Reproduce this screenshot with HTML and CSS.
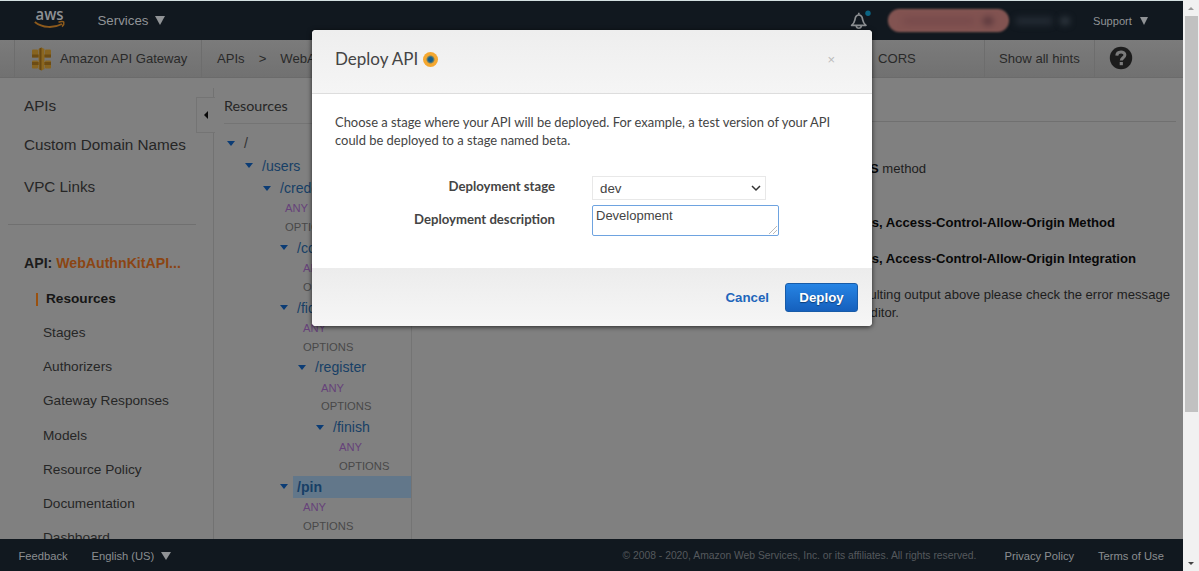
FILE: index.html
```html
<!DOCTYPE html>
<html lang="en">
<head>
<meta charset="utf-8">
<title>Amazon API Gateway</title>
<link rel="stylesheet" href="styles.css">
</head>
<body>
<div class="window">
  <div class="page">
    <header class="topbar">
      <svg class="aws-logo" width="34" height="28" viewBox="0 0 34 28">
        <text x="1.500" y="15.500" class="aws-word" textLength="28" lengthAdjust="spacingAndGlyphs">aws</text>
        <path d="M.8 18C8.500 24.200 20 24.200 28 20" fill="none" stroke="#8d5a1c" stroke-width="1.900"/>
        <path d="M24.500 18.300c2.200-1 4.900-.9 5.300-.2.300 1-.4 3.200-1.800 4.500" fill="none" stroke="#8d5a1c" stroke-width="1.500"/>
      </svg>
      <span class="services">Services</span><i class="caret caret-services"></i>
      <div class="bell">
        <svg width="22" height="22" viewBox="0 0 22 22">
          <path d="M1.600 15.300C4.500 13 4.600 11.300 5 9.300 5.400 6.500 6.700 5 8.800 5s3.400 1.500 3.800 4.300c.4 2 .5 3.700 3.400 6z" fill="none" stroke="#8c8f92" stroke-width="1.700" stroke-linejoin="round"/>
          <path d="M8.800 2.800v2M6.300 16c.3 3 4.700 3 5 0" fill="none" stroke="#8c8f92" stroke-width="1.700"/>
          <circle cx="18" cy="3.200" r="2.700" fill="#0b6584"/>
        </svg>
      </div>
      <div class="account"><i class="smudge smudge-a"></i><i class="smudge smudge-b"></i></div>
      <div class="region"><i class="smudge smudge-c"></i><i class="smudge smudge-d"></i></div>
      <span class="support">Support</span><i class="caret caret-support"></i>
    </header>

    <nav class="crumbs">
      <div class="crumb-service">
        <svg width="22" height="24" viewBox="0 0 22 24">
          <g fill="#876420"><rect x="1" y="2.500" width="6" height="8" rx="1"/><rect x="1" y="13.500" width="6" height="8" rx="1"/><rect x="14" y="2.500" width="6" height="8" rx="1"/><rect x="14" y="13.500" width="6" height="8" rx="1"/></g>
          <g fill="#6d4c14"><rect x="1" y="7.500" width="19" height="3"/><rect x="1" y="15" width="19" height="3"/></g>
          <path d="M7.500 2l3-1.500 3 1.500v20l-3 1.500-3-1.500z" fill="#8b6720"/><path d="M10.500.5v23l-2-1V1.500z" fill="#684812"/>
        </svg>
        <span>Amazon API Gateway</span>
      </div>
      <div class="crumb-path"><span>APIs</span><span>&gt;</span><span>WebA</span></div>
      <div class="crumb-cors">CORS</div>
      <div class="crumb-hints">Show all hints</div>
      <svg class="help" width="24" height="24" viewBox="0 0 24 24">
        <circle cx="12" cy="12" r="11.200" fill="#1c1c1c"/>
        <path d="M7.800 9.600C8 4.800 16 4.900 15.900 9c-.1 2.700-3.600 2.800-3.600 5.500" fill="none" stroke="#7b7b7b" stroke-width="3"/>
        <rect x="10.700" y="16" width="3.200" height="3.200" fill="#7b7b7b"/>
      </svg>
    </nav>

    <div class="content">
      <aside class="sidebar">
        <div class="side-top">APIs</div>
        <div class="side-top side-domain">Custom Domain Names</div>
        <div class="side-top side-vpc">VPC Links</div>
        <div class="side-api">API: <b>WebAuthnKitAPI...</b></div>
        <ul class="side-menu">
          <li class="current">Resources</li>
          <li>Stages</li><li>Authorizers</li><li>Gateway Responses</li><li>Models</li>
          <li>Resource Policy</li><li>Documentation</li><li>Dashboard</li>
        </ul>
      </aside>
      <div class="gutter"><div class="collapse"><i></i></div></div>
      <section class="tree">
        <h2>Resources</h2>
        <div class="node root"><i></i><span>/</span></div>
        <div class="node l1"><i></i><span>/users</span></div>
        <div class="node l2"><i></i><span>/credentials</span></div>
        <div class="method any m2">ANY</div><div class="method m2">OPTIONS</div>
        <div class="node l3"><i></i><span>/codes</span></div>
        <div class="method any m3">ANY</div><div class="method m3">OPTIONS</div>
        <div class="node l3"><i></i><span>/fido2</span></div>
        <div class="method any m3">ANY</div><div class="method m3">OPTIONS</div>
        <div class="node l4"><i></i><span>/register</span></div>
        <div class="method any m4">ANY</div><div class="method m4">OPTIONS</div>
        <div class="node l5"><i></i><span>/finish</span></div>
        <div class="method any m5">ANY</div><div class="method m5">OPTIONS</div>
        <div class="node l3 selected"><i></i><span>/pin</span></div>
        <div class="method any m3">ANY</div><div class="method m3">OPTIONS</div>
      </section>
      <main class="result">
        <div class="line line-a"><b>OPTIONS</b> method</div>
        <div class="line line-b"><b>Methods, Access-Control-Allow-Origin Method</b></div>
        <div class="line line-c"><b>Methods, Access-Control-Allow-Origin Integration</b></div>
        <div class="line line-d">resulting output above please check the error message</div>
        <div class="line line-e">editor.</div>
      </main>
    </div>

    <footer class="footer">
      <span class="feedback">Feedback</span>
      <span class="language">English (US)</span><i class="caret caret-language"></i>
      <span class="copyright">© 2008 - 2020, Amazon Web Services, Inc. or its affiliates. All rights reserved.</span>
      <span class="privacy">Privacy Policy</span>
      <span class="terms">Terms of Use</span>
    </footer>
  </div>

  <div class="scrollbar"><i class="up"></i><div class="thumb"></div><i class="down"></i></div>

  <div class="modal">
    <div class="modal-head">
      <h1>Deploy API</h1><i class="beacon"></i><span class="close">×</span>
    </div>
    <div class="modal-body">
      <p><span class="intro-a">Choose a stage where your API will be deployed. For example, a test version of your API</span><br><span class="intro-b">could be deployed to a stage named beta.</span></p>
      <div class="field">
        <label>Deployment stage</label>
        <div class="select"><span>dev</span>
          <svg width="10" height="7" viewBox="0 0 10 7"><path d="M1 1l4 4 4-4" fill="none" stroke="#333" stroke-width="1.500"/></svg>
        </div>
      </div>
      <div class="field field-desc">
        <label>Deployment description</label>
        <div class="textarea"><span>Development</span>
          <svg width="9" height="9" viewBox="0 0 9 9"><path d="M1 9l8-8M5 9l4-4" stroke="#bbb" stroke-width="1"/></svg>
        </div>
      </div>
    </div>
    <div class="modal-foot"><span class="cancel">Cancel</span><span class="deploy">Deploy</span></div>
  </div>
</div>
</body>
</html>
```
FILE: styles.css
```css
* { box-sizing: border-box; }
body { margin: 0; font-family: "Liberation Sans", Arial, sans-serif; }
i { font-style: normal; flex: none; }
span, svg { flex: none; }
.window { position: relative; display: flex; width: 1199px; height: 571px; overflow: hidden; }
.page { display: flex; flex-direction: column; width: 1183px; height: 571px; background: #808080; }

.topbar { display: flex; align-items: center; flex: none; height: 40px; border-top: 1px solid #d3dfe0; background: #11181f; color: #909396; white-space: nowrap; }
.aws-logo { margin: 0 0 5px 34px; overflow: visible; }
.aws-word { font: 600 16px "Open Sans", sans-serif; fill: #8f9194; }
.services { width: 51px; margin-left: 29.500px; font-size: 13.300px; }
.caret { width: 0; height: 0; border: 5px solid transparent; border-top: 9px solid #909396; border-bottom: 0; }
.caret-services { margin-left: 6px; }
.bell { width: 22px; height: 22px; margin-left: 685.500px; }
.account { display: flex; align-items: center; width: 121px; height: 23px; margin-left: 16px; border-radius: 11px; background: #825351; border: 1px solid #93605a; filter: blur(.8px); }
.smudge { height: 8px; border-radius: 4px; filter: blur(3px); }
.smudge-a { width: 72px; margin-left: 14px; background: #784b4c; }
.smudge-b { width: 10px; margin-left: 8px; background: #54343a; }
.region { display: flex; width: 66px; }
.smudge-c { width: 38px; margin-left: 6px; background: #232a33; }
.smudge-d { width: 10px; margin-left: 7px; background: #303840; }
.support { width: 42px; margin-left: 18px; font-size: 11.100px; }
.caret-support { margin-left: 5px; border-width: 8px 4.500px 0; }

.crumbs { display: flex; flex: none; height: 38px; background: linear-gradient(#7b7b7b, #717171); border-bottom: 1px solid #6b6b6b; color: #292929; font-size: 13.100px; line-height: 37px; white-space: nowrap; }
.crumb-service { display: flex; align-items: center; gap: 7px; width: 188px; margin-left: 14px; padding-left: 16px; border-left: 1px solid #6d6d6d; border-right: 1px solid #6d6d6d; }
.crumb-path { display: flex; gap: 14px; width: 570px; padding-left: 15px; }
.crumb-cors { width: 213px; padding-left: 106px; border-right: 1px solid #6d6d6d; }
.crumb-hints { width: 110px; padding-left: 14px; border-right: 1px solid #6d6d6d; }
.help { margin: 6px 0 0 14px; }

.content { display: flex; height: 461px; overflow: hidden; color: #262626; }
.sidebar { width: 196px; padding: 18px 0 0 8px; white-space: nowrap; }
.side-top { padding-left: 16px; font-size: 15.260px; line-height: 20px; }
.side-domain { margin-top: 19px; }
.side-vpc { margin-top: 22px; height: 48px; border-bottom: 1px solid #707070; }
.side-api { margin-top: 28px; padding-left: 16px; font-size: 14.150px; font-weight: bold; line-height: 20px; color: #1c1c1c; }
.side-api b { color: #8b4513; }
.side-menu { margin: 9px 0 0; padding: 0 0 0 35px; list-style: none; font-size: 13.650px; line-height: 34.150px; }
.side-menu li { height: 34.150px; }
.side-menu .current { display: flex; align-items: center; margin-left: -7px; font-weight: bold; font-size: 13.650px; color: #161616; }
.side-menu .current::before { content: ""; width: 2px; height: 13px; margin-right: 8px; background: #9a510f; }
.gutter { width: 19px; padding-top: 19px; background: linear-gradient(#727272, #727272) right 1px top 10px / 1px 100% no-repeat; }
.collapse { display: flex; align-items: center; justify-content: center; width: 19px; height: 36px; border: 1px solid #747474; border-right: 0; background: #808080; }
.collapse i { border: 4px solid transparent; border-right: 4px solid #090909; border-left: 0; }
.tree { width: 197px; padding-left: 9px; border-right: 1px solid #747474; white-space: nowrap; overflow: hidden; }
.tree h2 { height: 46px; margin: 0 0 8.200px; padding-top: 18px; border-bottom: 1px solid #747474; font: 14.300px/20px Lato, sans-serif; color: #262626; }
.node { display: flex; align-items: center; height: 22.400px; font-size: 14.100px; line-height: 22.400px; color: #173f66; }
.node i { width: 0; border: 4.500px solid transparent; border-top: 5px solid #0b3c75; border-bottom: 0; margin-right: 5px; }
.node span { flex: 1; padding-left: 4px; }
.root { padding-left: 3px; }
.root span { color: #333; }
.l1 { padding-left: 21px; }
.l2 { padding-left: 39px; }
.l3 { padding-left: 56px; }
.l4 { padding-left: 74px; }
.l5 { padding-left: 92px; }
.selected { font-weight: bold; }
.selected span { background: #62778a; }
.method { height: 18.700px; font-size: 11.200px; line-height: 18.700px; color: #484848; }
.any { color: #66427a; }
.m2 { padding-left: 61px; }
.m3 { padding-left: 79px; }
.m4 { padding-left: 97px; }
.m5 { padding-left: 115px; }
.result { flex: none; width: 764px; border-top: 1px solid #707070; margin-top: 43px; font-size: 13.100px; line-height: 20px; color: #1d1d1d; }
.line { text-align: right; white-space: nowrap; height: 20px; }
.line b { color: #080808; }
.line-a { width: 514px; margin-top: 37px; }
.line-b { width: 703px; margin-top: 34px; }
.line-c { width: 724px; margin-top: 16px; }
.line-d { width: 758px; margin-top: 16px; }
.line-e { width: 487px; margin-top: -2px; }

.footer { display: flex; align-items: center; flex: none; height: 32px; padding: 1px 0 0 18.500px; background: #11181f; color: #8b8e91; font-size: 11.200px; white-space: nowrap; }
.feedback { width: 73px; }
.language { width: 64px; }
.caret-language { margin-left: 5px; border-width: 8px 5px 0; }
.copyright { width: 382px; margin-left: 452px; font-size: 10.330px; color: #55595d; }
.privacy { width: 93.500px; }

.scrollbar { display: flex; flex-direction: column; align-items: center; width: 16px; background: #f1f1f1; }
.up { margin: 7px 0 6px; border: 3px solid transparent; border-bottom: 3px solid #9a9a9a; border-top: 0; }
.thumb { width: 13px; height: 396px; background: #c1c1c1; }
.down { margin-top: 150px; border: 3px solid transparent; border-top: 3px solid #444; border-bottom: 0; }

.modal { position: absolute; left: 312px; top: 30px; width: 560px; height: 296px; border-radius: 4px; background: #fff; box-shadow: 0 1px 5px rgba(0, 0, 0, .7); overflow: hidden; color: #444; }
.modal-head { display: flex; align-items: center; height: 64px; padding: 0 37px 5px 23px; background: linear-gradient(#eee, #f5f5f5); border-bottom: 1px solid #ddd; }
.modal h1 { margin: 0; font: 17px/24px Lato, sans-serif; color: #444; }
.beacon { width: 15px; height: 15px; margin-left: 5px; border-radius: 50%; background: radial-gradient(circle, #135e8e 0 2px, #687d68 3.300px, #f5a830 4.500px); }
.close { margin-left: auto; font-size: 13px; color: #bbb; }
.modal-body { height: 174px; padding: 19px 23px 0; font-family: Lato, sans-serif; }
.modal p { margin: 0 0 27px; font-size: 12.950px; line-height: 18px; white-space: nowrap; }
.field { display: flex; }
.field label { width: 220px; text-align: right; font-size: 13.150px; font-weight: bold; line-height: 20px; }
.select { display: flex; align-items: center; justify-content: space-between; width: 174px; height: 24px; margin-left: 37px; padding: 0 4px 0 7px; border: 1px solid #e8e8e8; font: 13.300px "Liberation Sans", Arial, sans-serif; }
.field-desc { margin-top: 5px; }
.field-desc label { padding-top: 4px; }
.textarea { display: flex; justify-content: space-between; width: 187px; height: 31px; margin-left: 37px; padding: 2px 1px 1px 3px; border: 1px solid #6ea3e0; border-radius: 2px; font: 13px/16px "Liberation Sans", Arial, sans-serif; }
.textarea svg { align-self: flex-end; }
.modal-foot { display: flex; align-items: center; justify-content: flex-end; height: 58px; padding-right: 14px; background: linear-gradient(#ececec, #f6f6f6); font-size: 13.300px; font-weight: bold; }
.cancel { margin-right: 16px; color: #1f66bb; }
.deploy { width: 73px; height: 29px; border: 1px solid #175ba8; border-radius: 3px; background: linear-gradient(#2684e4, #1560bd); color: #fff; line-height: 27px; text-align: center; text-shadow: 0 1px 1px #0c3e78; }
```
